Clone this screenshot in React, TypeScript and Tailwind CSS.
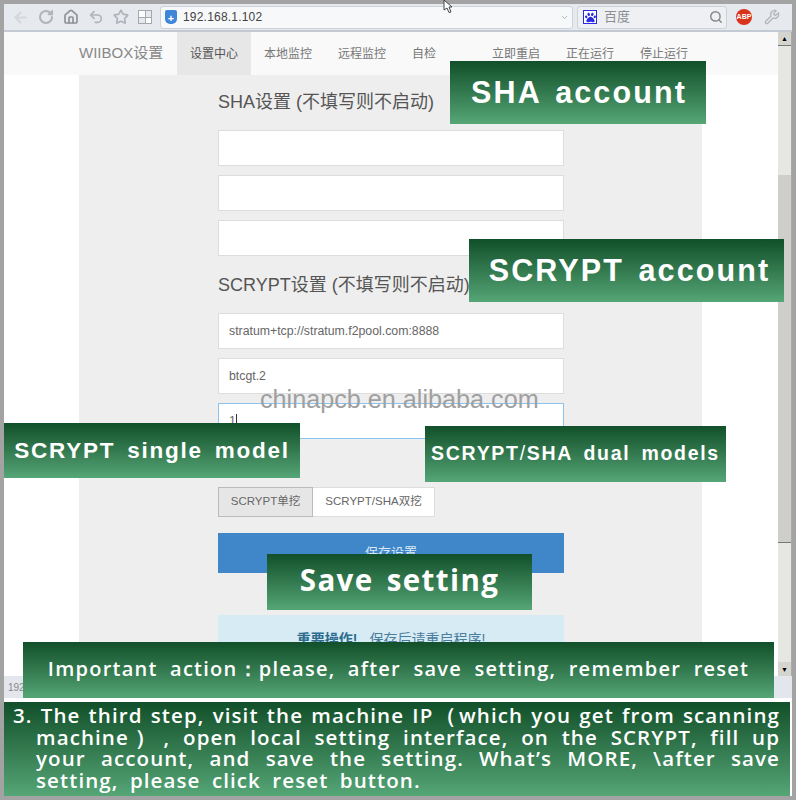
import React from 'react';
import { ArrowLeft, RotateCw, Home, Undo2, Star, Search, Wrench, ChevronDown } from 'lucide-react';
import { FaPaw } from 'react-icons/fa';

const cjk = "font-['Liberation_Sans','Noto_Sans_CJK_SC',sans-serif]";

function Toolbar() {
  return (
    <div className="flex h-[28px] items-center border-b-2 border-[#c4cad4] bg-[#e6e9ee] text-[#b0b3b8]">
      <div className="flex w-[156px] items-center gap-[9px] pl-[8px]">
        <ArrowLeft size={17} strokeWidth={3} className="text-[#d4d7dc]" />
        <RotateCw size={16} strokeWidth={3} />
        <Home size={16} strokeWidth={2.5} className="text-[#8f9297]" />
        <Undo2 size={16} strokeWidth={2.5} />
        <Star size={16} strokeWidth={2.5} />
        <div className="grid h-[14px] w-[14px] grid-cols-2 gap-px border border-[#a5a8ad] bg-[#a5a8ad]">
          <span className="bg-white" />
          <span className="bg-[#e6e9ee]" />
          <span className="bg-[#e6e9ee]" />
          <span className="bg-white" />
        </div>
      </div>
      <div className="flex h-[23px] w-[413px] items-center rounded-[3px] border border-[#cdd1d8] bg-[#f7f8fa] pl-[4px]">
        <div className="flex h-[14px] w-[12px] items-center justify-center rounded-b-[5px] rounded-t-[2px] bg-[#3f86d8] text-[11px] font-bold leading-none text-white">+</div>
        <span className={`ml-[6px] text-[12px] tracking-[0.2px] text-[#444] ${cjk}`}>192.168.1.102</span>
        <ChevronDown size={9} className="ml-auto mr-[3px] text-[#999]" />
      </div>
      <div className="ml-[4px] flex h-[23px] w-[150px] items-center rounded-[3px] border border-[#cdd1d8] bg-[#eef0f4] pl-[5px]">
        <div className="flex h-[14px] w-[14px] items-center justify-center border border-[#2a2ae0] bg-white text-[#2a2ae0]">
          <FaPaw size={11} />
        </div>
        <span className={`ml-[7px] text-[13px] text-[#8b8e93] ${cjk}`}>百度</span>
        <Search size={14} strokeWidth={2.5} className="ml-auto mr-[3px] text-[#888]" />
      </div>
      <div className={`ml-[9px] flex h-[16px] w-[16px] items-center justify-center rounded-full bg-[#d8331c] text-[7px] font-bold text-white ${cjk}`}>ABP</div>
      <Wrench size={16} className="ml-[12px] text-[#b3b6bb]" />
    </div>
  );
}

function NavBar() {
  const left = ['本地监控', '远程监控', '自检'];
  const right = ['立即重启', '正在运行', '停止运行'];
  return (
    <div className={`flex h-[43px] items-center bg-[#f9f9f9] text-[12px] text-[#777] ${cjk}`}>
      <span className="ml-[75px] w-[98px] text-[15px] text-[#888]">WIIBOX设置</span>
      <span className="flex h-full w-[74px] items-center justify-center bg-[#e7e7e7] text-[#555]">设置中心</span>
      <div className="ml-[13px] flex w-[228px] gap-[26px]">
        {left.map((t) => (
          <span key={t}>{t}</span>
        ))}
      </div>
      <div className="flex gap-[26px]">
        {right.map((t) => (
          <span key={t}>{t}</span>
        ))}
      </div>
    </div>
  );
}

function Field({ value, focus }: { value?: string; focus?: boolean }) {
  return (
    <div
      className={`flex h-[36px] items-center border bg-white px-[10px] text-[12.3px] text-[#666] ${
        focus ? 'border-[#8cc4f0]' : 'border-[#ddd]'
      }`}
    >
      {value}
      {focus && <span className="h-[14px] w-px bg-[#333]" />}
    </div>
  );
}

function Form() {
  return (
    <div className={`ml-[139px] w-[346px] ${cjk}`}>
      <h2 className="h-[55px] pt-[14px] text-[18px] text-[#555]">SHA设置 (不填写则不启动)</h2>
      <div className="flex flex-col gap-[9px]">
        <Field />
        <Field />
        <Field />
      </div>
      <h2 className="h-[57px] pt-[16px] text-[18px] text-[#555]">SCRYPT设置 (不填写则不启动)</h2>
      <div className="flex flex-col gap-[9px]">
        <Field value="stratum+tcp://stratum.f2pool.com:8888" />
        <Field value="btcgt.2" />
        <Field value="1" focus />
      </div>
      <div className="mt-[48px] flex h-[30px] text-[11.5px] text-[#666]">
        <span className="flex w-[95px] items-center justify-center border border-[#bbb] bg-[#e6e6e6]">SCRYPT单挖</span>
        <span className="flex w-[122px] items-center justify-center border border-l-0 border-[#ddd] bg-white">SCRYPT/SHA双挖</span>
      </div>
      <div className="mt-[16px] flex h-[40px] items-center justify-center bg-[#3f87c9] text-[13px] text-[#dbe8f4]">保存设置</div>
      <div className="mt-[42px] h-[60px] bg-[#d6ebf4] pt-[14px] text-center text-[14px] text-[#4a7c9c]">
        <b className="mr-[12px] text-[#2d6c8f]">重要操作!</b>保存后请重启程序!
      </div>
    </div>
  );
}

function Tag({ className, children }: { className: string; children: React.ReactNode }) {
  return (
    <div
      className={`absolute flex items-center justify-center whitespace-nowrap bg-gradient-to-b from-[#11502a] to-[#55a677] font-bold text-white ${className}`}
    >
      {children}
    </div>
  );
}

export default function App() {
  return (
    <div className="relative h-[800px] w-[796px] overflow-hidden bg-[#a3a3a3] pl-[4px] pt-[4px]">
      <div className="w-[788px]">
        <Toolbar />
        <div className="flex h-[644px]">
          <div className="h-full w-[774px] bg-white">
            <NavBar />
            <div className="ml-[75px] h-[601px] w-[623px] overflow-hidden bg-[#eeeeee]">
              <Form />
            </div>
          </div>
          <div className="flex w-[14px] flex-col border-r border-[#aaa] bg-[#e7e7e2]">
            <div className="flex h-[14px] items-center justify-center border-b border-[#777] bg-[#d5d5d0] text-[7px] leading-none text-black">▲</div>
            <div className="mt-[129px] h-[368px] border-b border-[#777] bg-[#cfcec9]" />
            <div className="mt-auto flex h-[14px] items-center justify-center bg-[#d5d5d0] text-[7px] leading-none text-black">▼</div>
          </div>
        </div>
        <div className={`flex h-[22px] items-center bg-[#e3e6ec] pl-[4px] text-[10px] text-[#888] ${cjk}`}>192</div>
        <div className="h-[4px] bg-white" />
        <div className="box-border h-[94px] whitespace-nowrap border-r-[2px] border-white bg-gradient-to-b from-[#11502a] to-[#55a677] pl-[9px] pr-[10px] pt-[3px] font-['Open_Sans',sans-serif] text-[20.5px] font-semibold leading-[21.5px] tracking-[1.1px] text-white">
          <p className="[text-align-last:justify]">3. The third step, visit the machine IP（which you get from scanning</p>
          <div className="pl-[23px]">
            <p className="[text-align-last:justify]">machine）, open local setting interface, on the SCRYPT, fill up</p>
            <p className="[text-align-last:justify]">your account, and save the setting. What’s MORE, \after save</p>
            <p className="[word-spacing:5px]">setting, please click reset button.</p>
          </div>
        </div>
      </div>

      {/* Watermark, pointer and green captions lying over the page */}
      <span className="absolute left-[260px] top-[381px] font-['Liberation_Sans',sans-serif] text-[25.2px] text-[#a0a0a0]">chinapcb.en.alibaba.com</span>
      <svg className="absolute left-[442px] top-0" width="13" height="13" viewBox="0 0 13 13">
        <path d="M2 0 L10 7 L7 7 L9 12 L7 12.5 L5 8 L2 10 Z" fill="#fff" stroke="#444" strokeWidth="1" />
      </svg>
      <Tag className="left-[450px] top-[61px] h-[63px] w-[256px] pl-[2px] font-['Liberation_Sans',sans-serif] text-[30.5px] tracking-[2.1px] [word-spacing:4px]">SHA account</Tag>
      <Tag className="left-[469px] top-[239px] h-[63px] w-[315px] pl-[6px] font-['Liberation_Sans',sans-serif] text-[30.5px] tracking-[2.1px] [word-spacing:4px]">SCRYPT account</Tag>
      <Tag className="left-[4px] top-[423px] h-[55px] w-[296px] font-['Liberation_Sans',sans-serif] text-[22.5px] tracking-[1.75px] [word-spacing:4px]">SCRYPT single model</Tag>
      <Tag className="left-[425px] top-[426px] h-[56px] w-[301px] font-['Liberation_Sans',sans-serif] text-[19.5px] tracking-[1.7px] [word-spacing:4px]">
        SCRYPT<span className="font-normal">/</span>SHA dual models
      </Tag>
      <Tag className="left-[267px] top-[554px] h-[56px] w-[265px] pb-[3px] font-['Open_Sans',sans-serif] text-[29.5px] tracking-[1.4px] [word-spacing:4px]">Save setting</Tag>
      <Tag className="left-[23px] top-[642px] h-[56px] w-[751px] pb-[3px] font-['Open_Sans',sans-serif] text-[20px] font-semibold tracking-[1.25px] [word-spacing:6px]">Important action：please, after save setting, remember reset</Tag>
    </div>
  );
}
